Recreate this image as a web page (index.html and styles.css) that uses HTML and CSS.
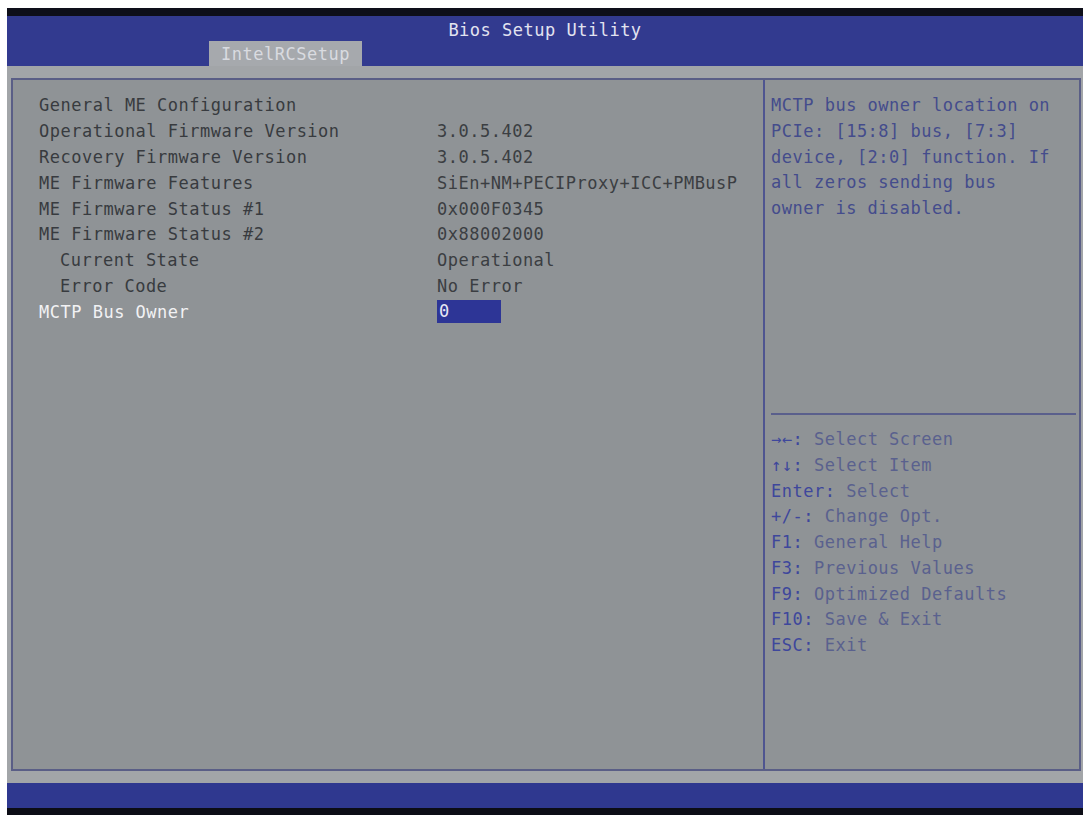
FILE: index.html
```html
<!DOCTYPE html>
<html>
<head>
<meta charset="utf-8">
<link rel="stylesheet" href="styles.css">
</head>
<body>
<div class="screen">
  <div class="topbar"></div>
  <div class="header">
    <div class="title">Bios Setup Utility</div>
    <div class="tab">IntelRCSetup</div>
  </div>
  <div class="main">
    <div class="panels">
      <div class="left">
        <div class="row"><span class="label">General ME Configuration</span></div>
        <div class="row"><span class="label">Operational Firmware Version</span><span class="value">3.0.5.402</span></div>
        <div class="row"><span class="label">Recovery Firmware Version</span><span class="value">3.0.5.402</span></div>
        <div class="row"><span class="label">ME Firmware Features</span><span class="value">SiEn+NM+PECIProxy+ICC+PMBusP</span></div>
        <div class="row"><span class="label">ME Firmware Status #1</span><span class="value">0x000F0345</span></div>
        <div class="row"><span class="label">ME Firmware Status #2</span><span class="value">0x88002000</span></div>
        <div class="row"><span class="label sub">Current State</span><span class="value">Operational</span></div>
        <div class="row"><span class="label sub">Error Code</span><span class="value">No Error</span></div>
        <div class="row active"><span class="label">MCTP Bus Owner</span><span class="value"><span class="sel">0</span></span></div>
      </div>
      <div class="right">
        <div class="help">MCTP bus owner location on<br>PCIe: [15:8] bus, [7:3]<br>device, [2:0] function. If<br>all zeros sending bus<br>owner is disabled.</div>
        <div class="divider"></div>
        <div class="keys">
          <div><span class="k">→←:</span> Select Screen</div>
          <div><span class="k">↑↓:</span> Select Item</div>
          <div><span class="k">Enter:</span> Select</div>
          <div><span class="k">+/-:</span> Change Opt.</div>
          <div><span class="k">F1:</span> General Help</div>
          <div><span class="k">F3:</span> Previous Values</div>
          <div><span class="k">F9:</span> Optimized Defaults</div>
          <div><span class="k">F10:</span> Save &amp; Exit</div>
          <div><span class="k">ESC:</span> Exit</div>
        </div>
      </div>
    </div>
  </div>
  <div class="footer"></div>
  <div class="bottombar"></div>
</div>
</body>
</html>
```

FILE: styles.css
```css
html, body {
  margin: 0;
  padding: 0;
  background: #ffffff;
}
body {
  font-family: "DejaVu Sans Mono", "Liberation Mono", monospace;
  font-size: 17px;
  letter-spacing: 0.5px;
}
.screen {
  margin: 8px 0 0 7px;
  width: 1076px;
  height: 807px;
  display: flex;
  flex-direction: column;
}
.topbar {
  height: 8px;
  background: #0e0f1a;
}
.header {
  height: 50px;
  background: #323a8f;
  display: flex;
  flex-direction: column;
  justify-content: space-between;
}
.title {
  text-align: center;
  color: #e2e3f0;
  line-height: 20px;
  padding-top: 4px;
}
.tab {
  margin-left: 202px;
  width: 153px;
  height: 25px;
  line-height: 26px;
  text-align: center;
  background: #a6a9ad;
  color: #d9dbe0;
}
.main {
  flex: 1;
  background: #a2a5a8;
  padding: 12px 2px 12px 4px;
  display: flex;
}
.panels {
  flex: 1;
  display: flex;
  border: 2px solid #5a5e86;
  background: #8f9396;
}
.left {
  width: 752px;
  border-right: 2px solid #4f5590;
  padding: 13px 0 0 26px;
  box-sizing: border-box;
}
.row {
  display: flex;
  height: 25.9px;
  line-height: 25.9px;
  color: #383b3f;
}
.label {
  width: 398px;
  flex: none;
}
.label.sub {
  padding-left: 21px;
  width: 377px;
}
.value {
  color: #3b3e42;
}
.row.active .label {
  color: #f2f2f4;
}
.sel {
  display: inline-block;
  width: 62px;
  height: 23px;
  line-height: 23px;
  margin-top: 0;
  padding-left: 2px;
  background: #2d3596;
  color: #e8e8f4;
  vertical-align: top;
}
.right {
  flex: 1;
  display: flex;
  flex-direction: column;
}
.help {
  height: 320px;
  padding: 13px 0 0 6px;
  line-height: 25.75px;
  color: #444c8c;
}
.divider {
  height: 2px;
  margin: 0 3px 0 6px;
  background: #5a5f8c;
}
.keys {
  padding: 12px 0 0 6px;
  line-height: 25.75px;
  color: #5a618e;
}
.k {
  color: #3e479c;
}
.footer {
  height: 25px;
  background: #2f388f;
}
.bottombar {
  height: 7px;
  background: #0c0d16;
}
```
